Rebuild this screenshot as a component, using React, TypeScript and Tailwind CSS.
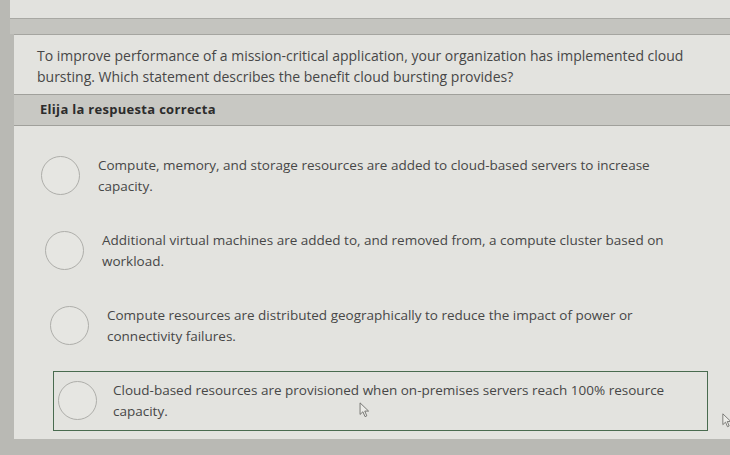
import React from 'react';

const options = [
  {
    lines: ['Compute, memory, and storage resources are added to cloud-based servers to increase', 'capacity.'],
    indent: 'pl-[27px]',
  },
  {
    lines: ['Additional virtual machines are added to, and removed from, a compute cluster based on', 'workload.'],
    indent: 'pl-[31px]',
  },
  {
    lines: ['Compute resources are distributed geographically to reduce the impact of power or', 'connectivity failures.'],
    indent: 'pl-[36px]',
  },
];

const Cursor = ({ className }: { className: string }) => (
  <svg viewBox="0 0 12 18" className={className}>
    <path d="M1 1 L1 14 L4.2 11 L6.6 16.5 L8.6 15.6 L6.3 10.2 L10.6 10.2 Z" fill="#ecece8" stroke="#6b6b68" strokeWidth="1" strokeLinejoin="round" />
  </svg>
);

const Radio = () => (
  <div className="w-[39px] h-[39px] shrink-0 rounded-full border-[1.5px] border-[#aeaeaa] bg-[#e6e6e2]" />
);

export default function App() {
  return (
    <div className="relative w-[730px] h-[455px] overflow-hidden bg-[#b9b9b4] font-['Open_Sans',sans-serif]">
      {/* previous card */}
      <div className="ml-[10px] h-[19px] bg-[#e2e2de] border-b border-[#a8a8a3]" />
      <div className="ml-[10px] h-[15px] bg-[#c4c4bf]" />

      {/* question card */}
      <div className="ml-[14px] h-[405px] bg-[#e3e3df] border-t border-[#a5a5a0] flex flex-col">
        <div className="pl-[23px] pt-[10px] pb-[7px] text-[14px] leading-[21px] text-[#474747]">
          <div>To improve performance of a mission-critical application, your organization has implemented cloud</div>
          <div>bursting. Which statement describes the benefit cloud bursting provides?</div>
        </div>

        <div className="h-[32px] bg-[#c8c8c3] border-y border-[#a0a09b] flex items-center pl-[26px]">
          <span className="text-[13px] font-bold text-[#2c2c2c] tracking-[0.3px]">Elija la respuesta correcta</span>
        </div>

        <div className="pt-[12px] flex flex-col">
          {options.map((o, i) => (
            <div key={i} className={`h-[75px] flex items-center gap-[18px] ${o.indent}`}>
              <Radio />
              <div className="text-[13.5px] leading-[21px] text-[#474747]">
                {o.lines.map((l) => (
                  <div key={l}>{l}</div>
                ))}
              </div>
            </div>
          ))}

          <div className="h-[75px] flex items-center pl-[39px] pr-[22px]">
            <div className="relative flex-1 h-[60px] border-[1.5px] border-[#496b4f] flex items-center gap-[16px] pl-[4px]">
              <Radio />
              <div className="text-[13.5px] leading-[21px] text-[#474747]">
                <div>Cloud-based resources are provisioned when on-premises servers reach 100% resource</div>
                <div>capacity.</div>
              </div>
              <Cursor className="absolute left-[305px] top-[30px] w-[11px] h-[16px]" />
            </div>
          </div>
        </div>
      </div>

      <Cursor className="absolute left-[722px] top-[413px] w-[10px] h-[15px]" />
    </div>
  );
}
